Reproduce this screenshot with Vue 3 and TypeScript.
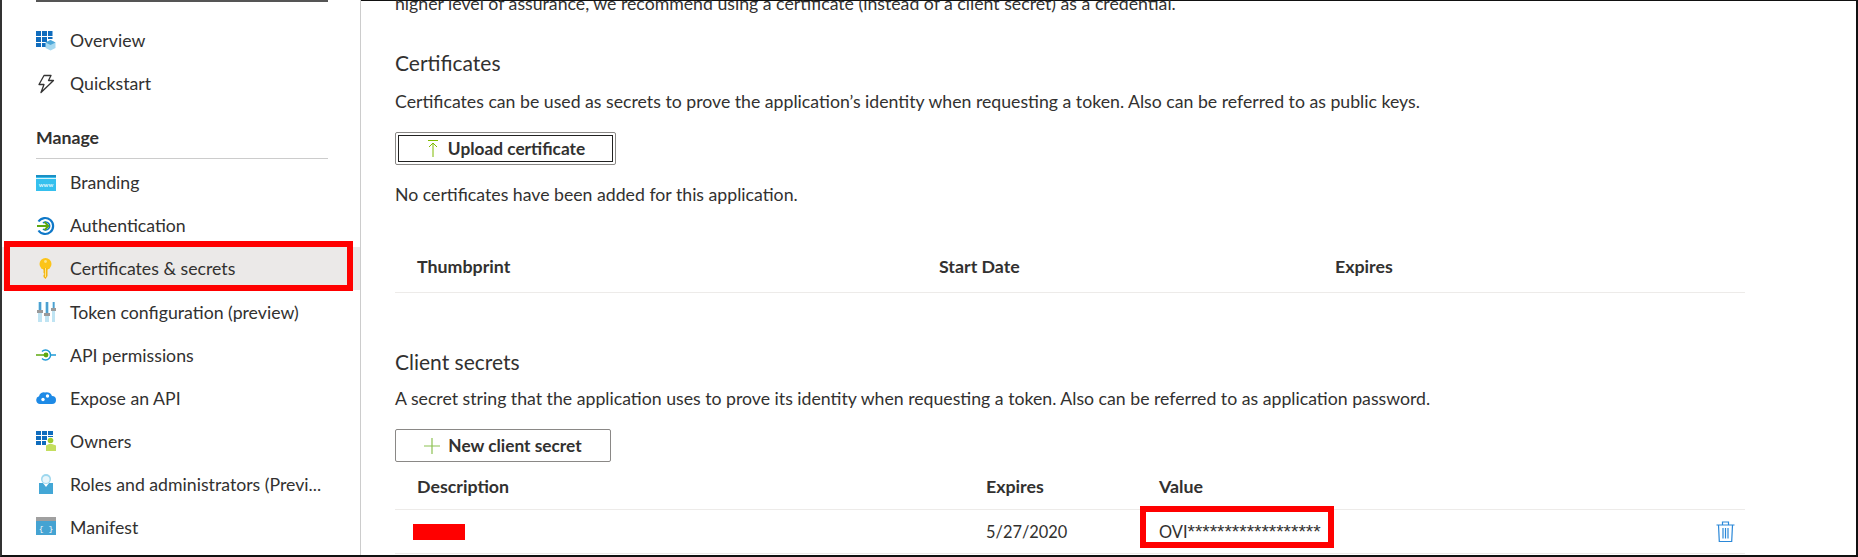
<script setup lang="ts">
interface NavItem {
  id: string
  label: string
  active?: boolean
}

const topItems: NavItem[] = [
  { id: 'overview', label: 'Overview' },
  { id: 'quickstart', label: 'Quickstart' }
]

const manageItems: NavItem[] = [
  { id: 'branding', label: 'Branding' },
  { id: 'auth', label: 'Authentication' },
  { id: 'certs', label: 'Certificates & secrets', active: true },
  { id: 'token', label: 'Token configuration (preview)' },
  { id: 'api', label: 'API permissions' },
  { id: 'expose', label: 'Expose an API' },
  { id: 'owners', label: 'Owners' },
  { id: 'roles', label: 'Roles and administrators (Previ...' },
  { id: 'manifest', label: 'Manifest' }
]
</script>

<template>
  <div class="page">
    <aside class="sidebar">
      <div class="top-rule"></div>
      <nav class="nav-group first">
        <a v-for="item in topItems" :key="item.id" class="nav-item">
          <span class="nav-icon">
            <svg v-if="item.id === 'overview'" width="20" height="20" viewBox="0 0 20 20">
              <path fill="#0f6cbd" d="M0 0h5v5H0zM6 0h5v5H6zM12 0h4.500v5H12zM0 6h5v5H0zM6 6h5v5H6zM12 6h4.500v2H12zM0 12h5v4H0zM6 12h4v4H6z" />
              <path fill="#a5d8f0" d="M14.500 9l5 2.500v5.500l-5 2.500-5-2.500v-5.500z" />
              <path fill="#4fa8d8" d="M14.500 9l5 2.500-5 2.500-5-2.500z" />
            </svg>
            <svg v-else width="20" height="20" viewBox="0 0 20 20">
              <path fill="none" stroke="#333" stroke-width="1.300" stroke-linejoin="round" d="M8 1.500h7l-2.500 5h5L5 18.500l3-8H3z" />
            </svg>
          </span>
          <span class="nav-label">{{ item.label }}</span>
        </a>
      </nav>
      <div class="nav-heading">Manage</div>
      <nav class="nav-group manage">
        <a
          v-for="item in manageItems"
          :key="item.id"
          class="nav-item"
          :class="{ active: item.active }"
        >
          <span class="nav-icon">
            <svg v-if="item.id === 'branding'" width="20" height="20" viewBox="0 0 20 20">
              <rect y="2" width="20" height="16" fill="#35c0ee" />
              <rect y="2" width="20" height="2" fill="#1b8fc4" />
              <rect y="5" width="20" height="1" fill="#d8f3fb" />
              <text x="10" y="14" font-size="6" font-weight="700" font-family="Lato, sans-serif" fill="#e4f8fd" text-anchor="middle">www</text>
            </svg>
            <svg v-else-if="item.id === 'auth'" width="20" height="20" viewBox="0 0 20 20">
              <path fill="none" stroke="#0f78c8" stroke-width="2.200" d="M2.500 5.500a8 8 0 1 1 0 9" />
              <path fill="none" stroke="#0f78c8" stroke-width="1.600" d="M7 7a4 4 0 1 1 0 6" />
              <path fill="none" stroke="#5ea80f" stroke-width="1.800" d="M1 10h11M8.500 6l4 4-4 4" />
            </svg>
            <svg v-else-if="item.id === 'certs'" width="20" height="21" viewBox="0 0 20 21">
              <circle cx="9.500" cy="6" r="6" fill="#fcc419" />
              <path fill="#f5b50f" d="M7.500 10h4v8l-2 3-2-2v-2l1-1-1-1z" />
              <circle cx="9.500" cy="3.500" r="1.400" fill="#fbe38a" />
              <rect x="9" y="10" width="1" height="9" fill="#fde58c" />
            </svg>
            <svg v-else-if="item.id === 'token'" width="20" height="20" viewBox="0 0 20 20">
              <rect x="2" y="0" width="4" height="20" fill="#bfe4f3" />
              <rect x="9" y="0" width="4" height="20" fill="#bfe4f3" />
              <rect x="16" y="0" width="3" height="20" fill="#bfe4f3" />
              <rect x="3" y="0" width="2" height="11" fill="#4d9fd0" />
              <rect x="10" y="0" width="2" height="14" fill="#4d9fd0" />
              <rect x="17" y="0" width="1.500" height="9" fill="#4d9fd0" />
              <rect x="1" y="8" width="6" height="3" fill="#9a9a9a" />
              <rect x="8" y="11" width="6" height="3" fill="#9a9a9a" />
              <rect x="15" y="6" width="5" height="3" fill="#9a9a9a" />
            </svg>
            <svg v-else-if="item.id === 'api'" width="20" height="20" viewBox="0 0 20 20">
              <path fill="none" stroke="#1f9ad6" stroke-width="1.500" d="M6 6.500a5 5 0 1 1 0 7M15 10h5" />
              <path fill="none" stroke="#5ea80f" stroke-width="1.500" d="M0 10h10" />
              <circle cx="10" cy="10" r="2.400" fill="#5ea80f" />
            </svg>
            <svg v-else-if="item.id === 'expose'" width="20" height="20" viewBox="0 0 20 20">
              <path fill="#1e8ae6" d="M4 16a4 4 0 0 1-1-7.800 5 5 0 0 1 6-3.700 5.500 5.500 0 0 1 7 3.500 4 4 0 0 1 0 8z" />
              <circle cx="7" cy="11.500" r="1.700" fill="#fff" />
              <circle cx="11.500" cy="8" r="1.700" fill="#fff" />
            </svg>
            <svg v-else-if="item.id === 'owners'" width="20" height="20" viewBox="0 0 20 20">
              <path fill="#0f6cbd" d="M0 0h5v4H0zM6 0h5v4H6zM12 0h5v4H12zM0 5h5v4H0zM6 5h5v4H6zM0 10h5v4H0zM6 10h4v4H6zM12 5h5v1H12z" />
              <circle cx="14.500" cy="9.500" r="2.800" fill="#9ccc2e" />
              <path fill="#c4de5e" d="M10 20v-5.500l3-1.500h3l4 1.500V20z" />
            </svg>
            <svg v-else-if="item.id === 'roles'" width="20" height="20" viewBox="0 0 20 20">
              <rect x="3" y="9" width="14" height="11" fill="#43a7d6" />
              <path fill="#fff" d="M7 9h6l-3 4z" />
              <circle cx="10" cy="5" r="5" fill="#9dd7ee" />
              <circle cx="10" cy="5.500" r="3.500" fill="#e8f6fb" />
            </svg>
            <svg v-else width="20" height="20" viewBox="0 0 20 20">
              <rect y="0" width="20" height="18" fill="#45a3d2" />
              <rect y="0" width="20" height="4" fill="#a0a0a0" />
              <text x="10" y="14" font-size="8" font-family="'Liberation Mono', monospace" fill="#fff" text-anchor="middle">{ }</text>
            </svg>
          </span>
          <span class="nav-label">{{ item.label }}</span>
        </a>
      </nav>
    </aside>

    <main class="content">
      <p class="clipped-line">higher level of assurance, we recommend using a certificate (instead of a client secret) as a credential.</p>

      <section class="cert-section">
        <h2>Certificates</h2>
        <p class="desc">Certificates can be used as secrets to prove the application’s identity when requesting a token. Also can be referred to as public keys.</p>
        <button class="btn focused" type="button">
          <span class="btn-inner">
            <svg width="14" height="18" viewBox="0 0 14 18">
              <path fill="none" stroke="#7fba00" stroke-width="1" d="M2 .5h10M7 17V3M3 7l4-4 4 4" />
            </svg>
            Upload certificate
          </span>
        </button>
        <p class="empty">No certificates have been added for this application.</p>
        <div class="cert-table">
          <span>Thumbprint</span>
          <span>Start Date</span>
          <span>Expires</span>
        </div>
      </section>

      <section class="secret-section">
        <h2>Client secrets</h2>
        <p class="desc">A secret string that the application uses to prove its identity when requesting a token. Also can be referred to as application password.</p>
        <button class="btn" type="button">
          <span class="btn-inner">
            <svg width="16" height="16" viewBox="0 0 16 16">
              <path fill="none" stroke="#8cc152" stroke-width="1.200" d="M8 0v16M0 8h16" />
            </svg>
            New client secret
          </span>
        </button>
        <div class="secret-table secret-head">
          <span>Description</span>
          <span>Expires</span>
          <span>Value</span>
          <span></span>
        </div>
        <div class="secret-table secret-row">
          <span class="redacted-cell"><i class="redacted"></i></span>
          <span>5/27/2020</span>
          <span class="value-cell">OVI<span class="stars">******************</span><b class="value-mark"></b></span>
          <span class="trash-cell">
            <svg width="19" height="21" viewBox="0 0 19 21">
              <path fill="none" stroke="#2b88d8" stroke-width="1.200" d="M.5 4h18M6.500 4V1h6v3M2.500 4l.8 16.500h12.400L16.500 4M7 7v10.500M9.500 7v10.500M12 7v10.500" />
            </svg>
          </span>
        </div>
      </section>
    </main>
  </div>
</template>

<style>
html,
body {
  margin: 0;
  background: #fff;
}
</style>

<style scoped>
.page {
  display: flex;
  width: 1858px;
  height: 557px;
  box-sizing: border-box;
  overflow: hidden;
  position: relative;
  background: #fff;
  font-family: Lato, "Open Sans", Arial, sans-serif;
  font-size: 17.700px;
  color: #323130;
  border-left: 2px solid #333;
  border-right: 2px solid #111;
  border-bottom: 2px solid #111;
}

.sidebar {
  width: 359px;
  flex: none;
  box-sizing: border-box;
  border-right: 1px solid #ccc;
}

.top-rule {
  height: 2px;
  margin: 0 32px 0 34px;
  background: #555;
}

.nav-group.first {
  margin-top: 17px;
}

.nav-group.manage {
  margin-top: 2px;
}

.nav-item {
  display: flex;
  align-items: center;
  height: 43.100px;
  padding-left: 34px;
  box-sizing: border-box;
  position: relative;
}

.nav-item.active {
  background: #ebe9e8;
}

.nav-item.active::after {
  content: "";
  position: absolute;
  left: 2px;
  right: 7px;
  top: -6px;
  bottom: -1px;
  border: 6px solid #f00;
  pointer-events: none;
}

.nav-icon {
  width: 34px;
  flex: none;
  display: flex;
  align-items: center;
}

.nav-heading {
  margin: 21px 32px 0 34px;
  height: 32px;
  font-weight: 700;
  line-height: 23px;
  border-bottom: 1px solid #ccc;
}

.content {
  flex: 1;
  padding-left: 34px;
  min-width: 0;
  border-top: 1px solid #111;
}

p {
  margin: 0;
}

.clipped-line {
  margin-top: -8px;
  line-height: 22px;
}

h2 {
  margin: 0;
  font-size: 21px;
  font-weight: 400;
  line-height: 28px;
}

.cert-section {
  margin-top: 34px;
}

.desc {
  margin-top: 14px;
  line-height: 22px;
}

.btn {
  display: block;
  margin: 19px 0 0;
  padding: 2px;
  height: 33px;
  box-sizing: border-box;
  border: 1px solid #8a8886;
  border-radius: 2px;
  background: #fff;
  font: inherit;
  color: #323130;
}

.btn-inner {
  display: flex;
  align-items: center;
  justify-content: center;
  gap: 8px;
  height: 100%;
  font-weight: 700;
  font-size: 17.300px;
}

.btn.focused {
  width: 221px;
}

.btn.focused .btn-inner {
  border: 1px solid #222;
  box-sizing: border-box;
}

.secret-section .btn {
  width: 216px;
}

.empty {
  margin-top: 19px;
  line-height: 22px;
}

.cert-table {
  display: grid;
  grid-template-columns: 522px 396px 1fr;
  margin-top: 44px;
  width: 1350px;
  box-sizing: border-box;
  height: 43px;
  padding: 0 0 10px 22px;
  align-items: center;
  font-weight: 700;
  font-size: 17.800px;
  border-bottom: 1px solid #edebe9;
}

.secret-section {
  margin-top: 55px;
}

.secret-section .desc {
  margin-top: 12px;
}

.secret-table {
  display: grid;
  grid-template-columns: 569px 173px 1fr 29px;
  width: 1350px;
  box-sizing: border-box;
  padding-left: 22px;
  align-items: center;
  border-bottom: 1px solid #edebe9;
}

.secret-head {
  height: 48px;
  font-weight: 700;
  font-size: 17.800px;
}

.secret-row {
  height: 44px;
  font-size: 16.400px;
}

.redacted-cell {
  display: flex;
}

.redacted {
  display: block;
  width: 52px;
  height: 16px;
  margin-left: -4px;
  background: #f00;
}

.value-cell {
  position: relative;
}

.stars {
  font-family: "Liberation Sans", Arial, sans-serif;
  font-size: 19px;
}

.value-mark {
  position: absolute;
  left: -19px;
  top: -15px;
  width: 194px;
  height: 42px;
  box-sizing: border-box;
  border: 6px solid #f00;
}

.trash-cell {
  display: flex;
}
</style>
